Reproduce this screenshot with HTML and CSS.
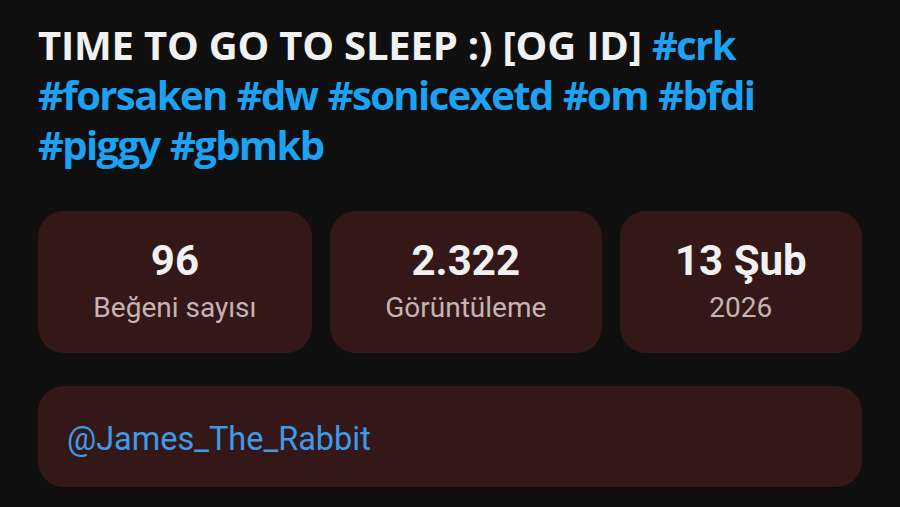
FILE: index.html
```html
<!DOCTYPE html>
<html lang="tr">
<head>
<meta charset="utf-8">
<link rel="stylesheet" href="styles.css">
</head>
<body>
<main class="page">
  <h1 class="title">TIME TO GO TO SLEEP :) [OG ID] <span class="tag">#crk</span> <span class="tag">#forsaken</span> <span class="tag">#dw</span> <span class="tag">#sonicexetd</span> <span class="tag">#om</span> <span class="tag">#bfdi</span> <span class="tag">#piggy</span> <span class="tag">#gbmkb</span></h1>
  <section class="stats">
    <div class="stat">
      <div class="value">96</div>
      <div class="label">Beğeni sayısı</div>
    </div>
    <div class="stat">
      <div class="value">2.322</div>
      <div class="label">Görüntüleme</div>
    </div>
    <div class="stat">
      <div class="value">13 Şub</div>
      <div class="label">2026</div>
    </div>
  </section>
  <section class="desc">
    <a class="mention" href="#">@James_The_Rabbit</a>
  </section>
</main>
</body>
</html>
```
FILE: styles.css
```css
html, body {
  margin: 0;
  padding: 0;
  background: #0f0f0f;
}
.page {
  padding: 20px 38px 0 38px;
  font-family: Roboto, "Liberation Sans", sans-serif;
}
.title {
  margin: 0;
  max-width: 790px;
  font-family: "Open Sans", "DejaVu Sans", sans-serif;
  font-weight: 700;
  font-size: 40px;
  line-height: 50px;
  color: #f1f1f1;
  letter-spacing: -0.2px;
}
.tag {
  color: #1da1f2;
  letter-spacing: -1.6px;
}
.stats {
  display: flex;
  gap: 18px;
  margin-top: 41px;
}
.stat {
  flex: 1 1 auto;
  box-sizing: border-box;
  background: #341818;
  border-radius: 26px;
  height: 142px;
  padding-top: 4px;
  display: flex;
  flex-direction: column;
  align-items: center;
  justify-content: center;
}
.value {
  color: #f1f1f1;
  font-weight: 700;
  font-size: 42px;
  line-height: 48px;
}
.label {
  color: #c5b4b4;
  font-size: 28px;
  line-height: 46px;
}
.desc {
  margin-top: 33px;
  background: #341818;
  border-radius: 26px;
  height: 101px;
  display: flex;
  align-items: center;
  padding: 0 29px;
}
.mention {
  color: #3d9be9;
  font-size: 32.5px;
  line-height: 44px;
  padding-top: 4px;
  text-decoration: none;
}
```
